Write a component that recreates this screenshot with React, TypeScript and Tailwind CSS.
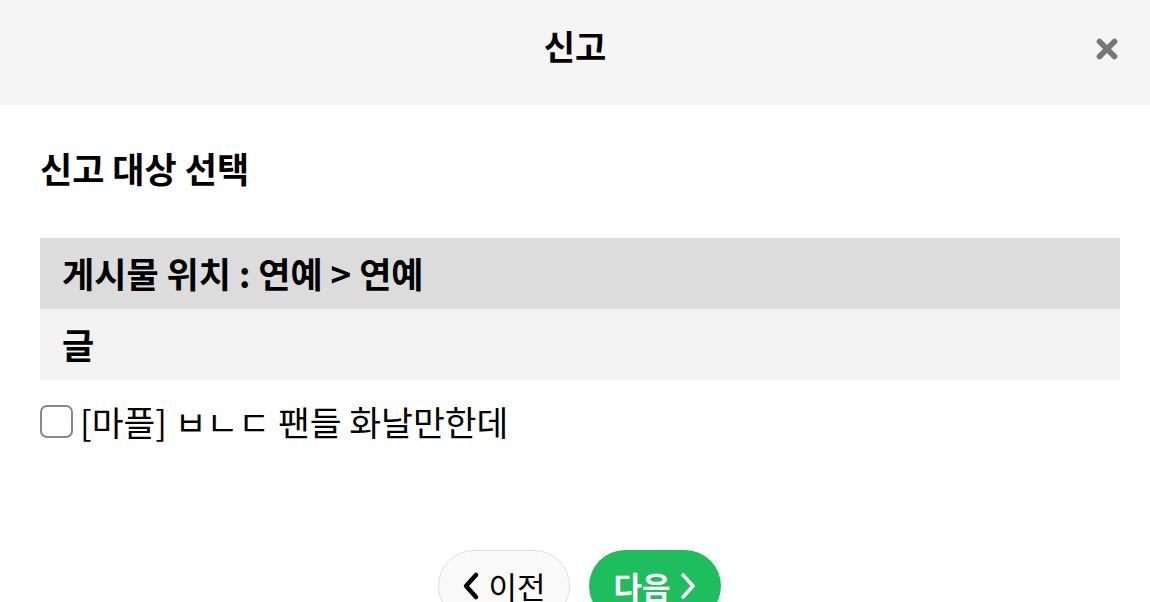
import { X } from "lucide-react";

export default function App() {
  return (
    <div className="min-h-screen bg-white text-black font-['Noto_Sans_CJK_KR','Noto_Sans',sans-serif]">
      {/* Header */}
      <div className="relative flex h-[105px] items-center justify-center bg-[#f5f5f5]">
        <h1 className="-mt-[14px] text-[34px] font-bold leading-none">신고</h1>
        <button className="absolute right-[28px] top-[34px] text-[#777]">
          <X size={30} strokeWidth={4.5} />
        </button>
      </div>

      <div className="pl-[40px] pr-[30px]">
        <h2 className="mt-[41px] text-[35px] font-bold leading-[44px]">신고 대상 선택</h2>

        <div className="mt-[48px]">
          <div className="flex h-[71px] items-center bg-[#dcdcdc] px-[22px] text-[35px] font-bold">
            게시물 위치 : 연예 &gt; 연예
          </div>
          <div className="flex h-[71px] items-center bg-[#f3f3f3] px-[22px] text-[35px] font-bold">
            글
          </div>
        </div>

        <label className="mt-[19px] flex items-center gap-[7px] text-[34.6px]">
          <span className="h-[33px] w-[33px] shrink-0 rounded-[7px] border-2 border-[#888] bg-white" />
          <span className="leading-[44px]">[마플] ㅂㄴㄷ 팬들 화날만한데</span>
        </label>

        <div className="mt-[107px] flex justify-center gap-[19px] pr-[1px]">
          <button className="flex h-[72px] w-[132px] items-center justify-center gap-[8px] rounded-full border border-[#dedede] bg-[#fafafa] text-[31px] text-black">
            <svg width="18" height="30" viewBox="0 0 18 30" fill="none" stroke="black" strokeWidth="4.5" strokeLinecap="round" strokeLinejoin="round">
              <path d="M14 4L4 15l10 11" />
            </svg>
            이전
          </button>
          <button className="flex h-[72px] w-[132px] items-center justify-center gap-[8px] rounded-full bg-[#1ebe5f] text-[31px] font-bold text-white">
            다음
            <svg width="18" height="30" viewBox="0 0 18 30" fill="none" stroke="white" strokeWidth="3.5" strokeLinecap="round" strokeLinejoin="round">
              <path d="M4 4l10 11L4 26" />
            </svg>
          </button>
        </div>
      </div>
    </div>
  );
}
